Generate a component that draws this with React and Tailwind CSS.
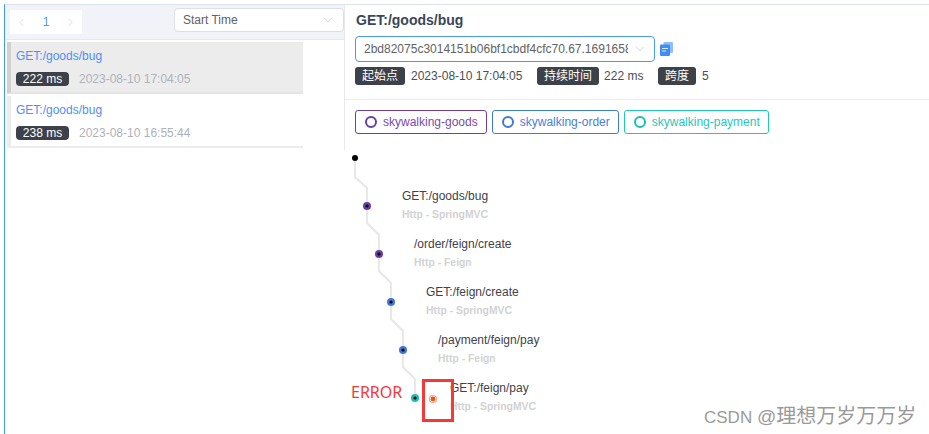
import React from "react";
import { ChevronLeft, ChevronRight, ChevronDown } from "lucide-react";

const FONT = "[font-family:'Liberation_Sans','Noto_Sans_CJK_SC',sans-serif]";

const TRACES = [
  { name: "GET:/goods/bug", ms: "222 ms", time: "2023-08-10 17:04:05", active: true },
  { name: "GET:/goods/bug", ms: "238 ms", time: "2023-08-10 16:55:44", active: false },
];

const SERVICES = [
  { name: "skywalking-goods", cls: "border-[#6f3fa8] text-[#7a4bb0]", ring: "border-[#6a3da5]" },
  { name: "skywalking-order", cls: "border-[#3f7ae0] text-[#4a80e0]", ring: "border-[#3f78d8]" },
  { name: "skywalking-payment", cls: "border-[#1fc8bd] text-[#1fc8bd]", ring: "border-[#16c0b8]" },
];

// x, y are the node's place on the tree canvas
const SPANS = [
  { x: 22, y: 56, color: "#6a3da5", label: "GET:/goods/bug", sub: "Http - SpringMVC" },
  { x: 34, y: 104, color: "#6a3da5", label: "/order/feign/create", sub: "Http - Feign" },
  { x: 46, y: 152, color: "#3f78d8", label: "GET:/feign/create", sub: "Http - SpringMVC" },
  { x: 58, y: 200, color: "#3f78d8", label: "/payment/feign/pay", sub: "Http - Feign" },
  { x: 70, y: 248, color: "#16c0b8", label: "GET:/feign/pay", sub: "Http - SpringMVC" },
];

function Tag({ children }) {
  return (
    <span className="flex h-[18px] items-center rounded-[3px] bg-[#3d4149] px-[7px] text-[12px] text-white">
      {children}
    </span>
  );
}

function TraceTree() {
  return (
    <div className="relative ml-px flex-1">
      <svg className="absolute left-0 top-0" width="584" height="284">
        <path
          d="M10 8 V27 L22 38 V73 L34 85 V121 L46 133 V169 L58 181 V217 L70 229 V248"
          fill="none"
          stroke="#e8e8e8"
          strokeWidth="2"
        />
        <circle cx="10" cy="8" r="3" fill="#000" />
        {SPANS.map((s) => (
          <g key={s.label}>
            <circle cx={s.x} cy={s.y} r="4" fill={s.color} />
            <circle cx={s.x} cy={s.y} r="1.6" fill="#000" />
          </g>
        ))}
        <circle cx="88" cy="249" r="3.5" fill="none" stroke="#f2a58c" strokeWidth="1.2" />
        <circle cx="88" cy="249" r="2.4" fill="#e8541e" />
      </svg>
      {SPANS.map((s) => (
        <div key={s.label} className="absolute whitespace-nowrap" style={{ left: s.x + 35, top: s.y - 18 }}>
          <div className="h-[16px] text-[12px] leading-[16px] text-[#3f4248]">{s.label}</div>
          <div className="mt-[3px] h-[16px] text-[10.4px] font-bold leading-[16px] text-[#d2d2d2]">{s.sub}</div>
        </div>
      ))}
      <span className="absolute left-[6px] top-[232px] [font-family:'Noto_Sans',sans-serif] text-[16px] leading-[20px] text-[#f53838]">
        ERROR
      </span>
      <div className="absolute left-[77px] top-[229px] h-[43px] w-[32px] border-[3px] border-[#f53838]" />
    </div>
  );
}

export default function App() {
  return (
    <div className={`${FONT} relative h-[434px] w-[929px] overflow-hidden bg-white pt-1`}>
      <div className="ml-1 flex h-full border-l border-t border-l-[#3f9cf5] border-t-[#dde3ee]">
        {/* trace list */}
        <div className="w-[339px] shrink-0">
          <div className="flex h-[35px] justify-between border-b border-[#e6e8ee] bg-[#f1f3f8] pl-[5px]">
            <div className="mt-[5px] flex h-[24px] w-[72px] items-center justify-between bg-white px-[5px] text-[#c7cbd3]">
              <ChevronLeft size={13} strokeWidth={1.2} />
              <span className="text-[12px] text-[#4f9cf8]">1</span>
              <ChevronRight size={13} strokeWidth={1.2} />
            </div>
            <div className="mt-[3px] flex h-[24px] w-[170px] items-center justify-between rounded-[4px] border border-[#dcdfe6] bg-white pl-2 pr-[8px] text-[12px] text-[#606266]">
              <span>Start Time</span>
              <ChevronDown size={14} strokeWidth={1} className="text-[#b4b8c0]" />
            </div>
          </div>
          <div className="mt-[2px] w-[298px] pl-[2px]">
            {TRACES.map((t) => (
              <div
                key={t.time}
                className={`h-[52px] border-b-2 border-l-4 pl-[5px] ${
                  t.active
                    ? "border-b-[#e4e4e4] border-l-[#d0d0d0] bg-[#ececec]"
                    : "mt-[2px] border-b-[#ececf0] border-l-[#ececec] bg-white"
                }`}
              >
                <div className="h-[28px] pt-[6px] text-[12px] leading-[16px] text-[#4f8ff7]">{t.name}</div>
                <div className="flex items-center gap-[10px]">
                  <span className="flex h-[14px] w-[53px] items-center justify-center rounded-[4px] bg-[#3d4149] text-[12px] text-white">
                    {t.ms}
                  </span>
                  <span className="text-[12px] text-[#aeb2bb]">{t.time}</span>
                </div>
              </div>
            ))}
          </div>
        </div>

        {/* trace detail */}
        <div className="flex flex-1 flex-col">
          <div className="border-l border-[#e6e8ee]">
            <div className="h-[95px] border-b border-[#ececf0] pl-[10px]">
              <div className="pl-px pt-[7px] text-[14px] font-bold leading-[17px] text-[#3a4756]">GET:/goods/bug</div>
              <div className="mt-[7px] flex items-center">
                <div className="flex h-[26px] w-[300px] items-center justify-between overflow-hidden rounded-[4px] border border-[#4a96f5] bg-white pl-2 pr-[7px]">
                  <span className="w-[264px] overflow-hidden whitespace-nowrap text-[12px] text-[#606266]">
                    2bd82075c3014151b06bf1cbdf4cfc70.67.16916588
                  </span>
                  <ChevronDown size={14} strokeWidth={1} className="shrink-0 text-[#b4b8c0]" />
                </div>
                <svg className="ml-[5px]" width="13" height="14" viewBox="0 0 13 14">
                  <rect x="3.5" y="0" width="9.5" height="11" rx="1" fill="#8fbdf5" />
                  <rect x="0" y="2.5" width="10" height="11.5" rx="1" fill="#3f8ef0" />
                  <path d="M2 6.5h6M2 9h4" stroke="#d7e7fc" strokeWidth="1" />
                </svg>
              </div>
              <div className="mt-[5px] flex items-center text-[12px] text-[#4a4e55]">
                <Tag>起始点</Tag>
                <span className="ml-[6px] w-[126px]">2023-08-10 17:04:05</span>
                <Tag>持续时间</Tag>
                <span className="ml-[5px] w-[54px]">222 ms</span>
                <Tag>跨度</Tag>
                <span className="ml-[6px]">5</span>
              </div>
            </div>
            <div className="flex h-[50px] gap-[5px] pl-[10px] pt-[10px]">
              {SERVICES.map((s) => (
                <div
                  key={s.name}
                  className={`flex h-[24px] items-center gap-[6px] rounded-[3px] border bg-white pl-[9px] pr-[8px] text-[12px] ${s.cls}`}
                >
                  <span className={`h-[12px] w-[12px] rounded-full border-2 ${s.ring}`} />
                  {s.name}
                </div>
              ))}
            </div>
          </div>
          <TraceTree />
        </div>
      </div>
      <span className="absolute left-[704px] top-[404px] whitespace-nowrap leading-[24px] text-[#9a9a9a]">
        <span className="text-[17px]">CSDN </span>
        <span className="text-[19px]">@</span>
        <span className="text-[20px]">理想万岁万万岁</span>
      </span>
    </div>
  );
}
